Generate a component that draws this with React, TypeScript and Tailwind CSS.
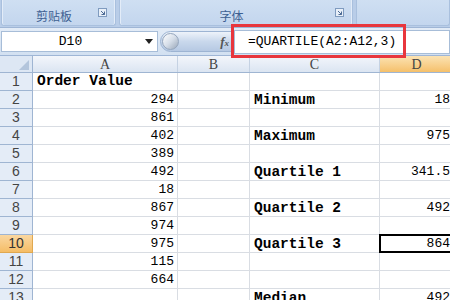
const colA = ['Order Value', '294', '861', '402', '389', '492', '18', '867', '974', '975', '115', '664', ''];
const colC: Record<number, string> = { 2: 'Minimum', 4: 'Maximum', 6: 'Quartile 1', 8: 'Quartile 2', 10: 'Quartile 3', 13: 'Median' };
const colD: Record<number, string> = { 2: '18', 4: '975', 6: '341.5', 8: '492', 10: '864', 13: '492' };

const mono = { fontFamily: '"Liberation Mono", "DejaVu Sans Mono", monospace' };

const Launcher = () => (
  <svg width="9" height="9" viewBox="0 0 9 9" className="shrink-0">
    <rect x="0.5" y="0.5" width="8" height="8" fill="#e8eff8" stroke="#7f9bbf" />
    <path d="M3 3 L6.5 6.5 M6.5 3.5 V6.5 H3.5" stroke="#4b6a94" strokeWidth="1" fill="none" />
  </svg>
);

const RibbonGroup = ({ label, width }: { label: string; width: string }) => (
  <div className={`${width} h-[26px] shrink-0 rounded-b-[3px] border border-t-0 border-[#a9c0de] bg-gradient-to-b from-[#cfdff2] to-[#c3d6ee] flex items-center pl-[8px] pr-[8px] pt-[6px] shadow-[inset_1px_0_0_#e3ecf8,inset_-1px_0_0_#e3ecf8]`}>
    <div className="flex-1 text-center text-[12px] text-[#3d5f92]" style={{ fontFamily: '"Noto Sans CJK SC", sans-serif' }}>
      {label}
    </div>
    <div className="-mt-[6px]">
      <Launcher />
    </div>
  </div>
);

export default function App() {
  return (
    <div className="relative w-[450px] h-[300px] overflow-hidden bg-white" style={mono}>
      {/* ribbon */}
      <div className="h-[28px] flex gap-[3px] bg-[#b9cde8] pl-[1px] border-b border-[#9fb6d6]">
        <RibbonGroup label="剪贴板" width="w-[115px]" />
        <RibbonGroup label="字体" width="w-[234px]" />
        <div className="flex-1 h-[26px] rounded-b-[3px] border border-t-0 border-[#a9c0de] bg-gradient-to-b from-[#cfdff2] to-[#c3d6ee]" />
      </div>

      {/* formula bar */}
      <div className="h-[28px] flex items-center bg-gradient-to-b from-[#e3ecf7] to-[#d2e0f1] border-b border-[#9fb6d6]">
        <div className="w-[157px] h-[21px] ml-[1px] bg-white border border-[#a7bdd8] flex items-center">
          <div className="flex-1 text-center text-[13px] text-black leading-none pr-[6px]">D10</div>
          <svg width="8" height="5" viewBox="0 0 8 5" className="mr-[4px]">
            <path d="M0 0 H8 L4 5 Z" fill="#222" />
          </svg>
        </div>
        <div className="relative w-[73px] h-[21px] ml-[2px] rounded-l-full bg-gradient-to-b from-[#eef3fa] via-[#c9d8ec] to-[#b6c9e3] border border-[#9db4d3] flex items-center justify-end pr-[3px]">
          <div className="absolute left-[1px] top-[1px] w-[17px] h-[17px] rounded-full bg-gradient-to-br from-[#ffffff] via-[#d6dee9] to-[#9aa8b9] border border-[#95a6bd]" />
          <span className="italic font-bold text-[13px] text-[#555]" style={{ fontFamily: '"Liberation Serif", serif' }}>
            f<span className="text-[9px]">x</span>
          </span>
        </div>
        <div className="flex-1 h-[24px] ml-[1px] bg-white border border-[#a7bdd8] flex items-center pl-[13px] text-[13px] text-black leading-none">
          =QUARTILE(A2:A12,3)
        </div>
      </div>

      {/* grid */}
      <div className="flex flex-col">
        <div className="h-[17px] flex bg-gradient-to-b from-[#f3f6fb] to-[#dbe5f2] border-b border-[#9fb5d2] text-[14px] text-[#444]" style={{ fontFamily: '"Liberation Serif", serif' }}>
          <div className="w-[33px] shrink-0 relative bg-[#dde7f4] border-r border-[#9fb5d2]">
            <svg width="10" height="10" viewBox="0 0 10 10" className="absolute right-[3px] bottom-[2px]">
              <path d="M10 0 V10 H0 Z" fill="#b3c5dc" />
            </svg>
          </div>
          <div className="w-[145px] shrink-0 flex items-center justify-center border-r border-[#c5d2e3]">A</div>
          <div className="w-[72px] shrink-0 flex items-center justify-center border-r border-[#c5d2e3]">B</div>
          <div className="w-[130px] shrink-0 flex items-center justify-center border-r border-[#c5d2e3]">C</div>
          <div className="w-[74px] shrink-0 flex items-center justify-center bg-gradient-to-b from-[#fbe3b3] to-[#f5c06a] border-r border-[#e0a850]">D</div>
        </div>

        {colA.map((a, i) => {
          const r = i + 1;
          const selected = r === 10;
          return (
            <div key={r} className="h-[18px] flex shrink-0">
              <div
                className={`w-[33px] shrink-0 flex items-center justify-center text-[14px] border-r border-b ${
                  selected
                    ? 'bg-gradient-to-b from-[#fad7a0] to-[#f5bd66] border-[#e0a850] text-[#333]'
                    : 'bg-[#e4ecf7] border-[#9fb5d2] text-[#444]'
                }`}
                style={{ fontFamily: '"Liberation Sans", sans-serif' }}
              >
                {r}
              </div>
              <div
                className={`w-[145px] shrink-0 flex items-center pt-[1px] border-r border-b border-[#d9dde3] ${
                  r === 1 ? 'justify-start pl-[4px] font-bold text-[14.5px]' : 'justify-end pr-[3px] text-[13px]'
                } text-black`}
              >
                {a}
              </div>
              <div className="w-[72px] shrink-0 border-r border-b border-[#d9dde3]" />
              <div className="w-[130px] shrink-0 flex items-center pl-[4px] pt-[2px] font-bold text-[14.5px] text-black border-r border-b border-[#d9dde3]">
                {colC[r] ?? ''}
              </div>
              <div className="relative w-[74px] shrink-0 flex items-center justify-end pr-[3px] pt-[1px] text-[13px] text-black border-r border-b border-[#d9dde3]">
                {colD[r] ?? ''}
                {selected && <div className="absolute -left-[1px] -top-[1px] -right-[1px] -bottom-[1px] border-2 border-black" />}
              </div>
            </div>
          );
        })}
      </div>

      {/* annotation */}
      <div className="absolute left-[231px] top-[24px] w-[175px] h-[34px] border-[3px] border-[#e8363d]" />
    </div>
  );
}
